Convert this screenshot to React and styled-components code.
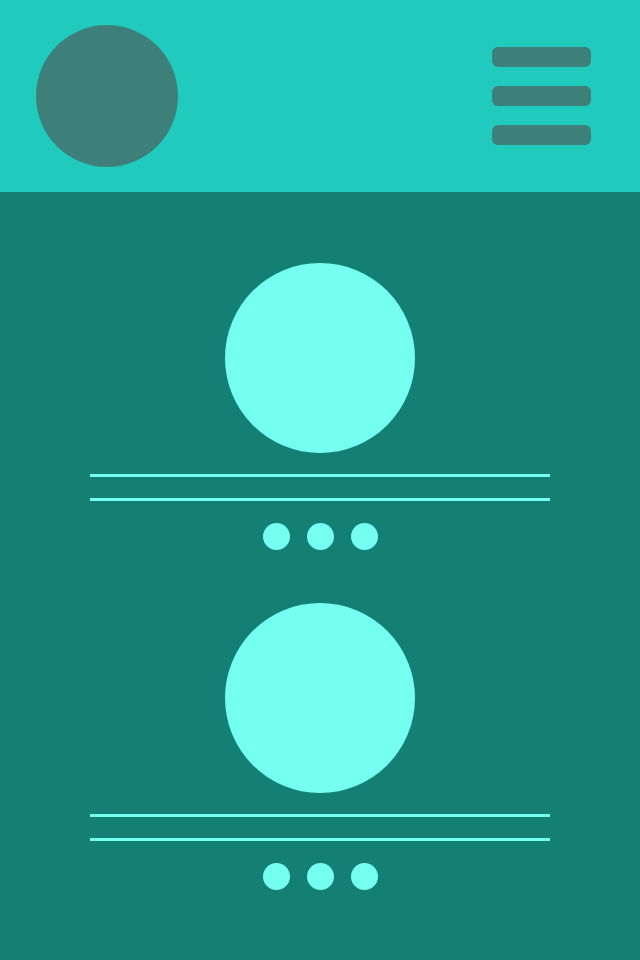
import styled, { createGlobalStyle } from 'styled-components'

const Global = createGlobalStyle`
    html, body {
        margin: 0;
        padding: 0;
        background-color: #137F75;
    }
`

const cards = [1, 2]

export default function App() {
    return (
        <>
            <Global />
            <Topo>
                <Avatar />
                <Menu>
                    <Barra />
                    <Barra />
                    <Barra />
                </Menu>
            </Topo>

            <Conteudo>
                {cards.map((c) => (
                    <Card key={c}>
                        <Foto />
                        <Linhas>
                            <Linha />
                            <Linha />
                        </Linhas>
                        <Pontos>
                            <Ponto />
                            <Ponto />
                            <Ponto />
                        </Pontos>
                    </Card>
                ))}
            </Conteudo>
        </>
    )
}

const Topo = styled.header`
    height: 192px;
    box-sizing: border-box;
    padding: 0 49px 0 36px;
    background-color: #20CBBD;
    display: flex;
    align-items: center;
    justify-content: space-between;
`

const Avatar = styled.div`
    width: 142px;
    height: 142px;
    border-radius: 50%;
    background-color: #3D8079;
`

const Menu = styled.div`
    display: flex;
    flex-direction: column;
    gap: 19px;
`

const Barra = styled.div`
    width: 99px;
    height: 20px;
    border-radius: 6px;
    background-color: #3D8079;
`

const Conteudo = styled.main`
    padding: 71px 90px 0 90px;
    display: flex;
    flex-direction: column;
    gap: 53px;
`

const Card = styled.section`
    display: flex;
    flex-direction: column;
    align-items: center;
`

const Foto = styled.div`
    width: 190px;
    height: 190px;
    border-radius: 50%;
    background-color: #74FFF1;
`

const Linhas = styled.div`
    width: 100%;
    margin-top: 21px;
    display: flex;
    flex-direction: column;
    gap: 21px;
`

const Linha = styled.div`
    height: 3px;
    background-color: #74FFF1;
`

const Pontos = styled.div`
    margin-top: 22px;
    display: flex;
    gap: 17px;
`

const Ponto = styled.div`
    width: 27px;
    height: 27px;
    border-radius: 50%;
    background-color: #74FFF1;
`
